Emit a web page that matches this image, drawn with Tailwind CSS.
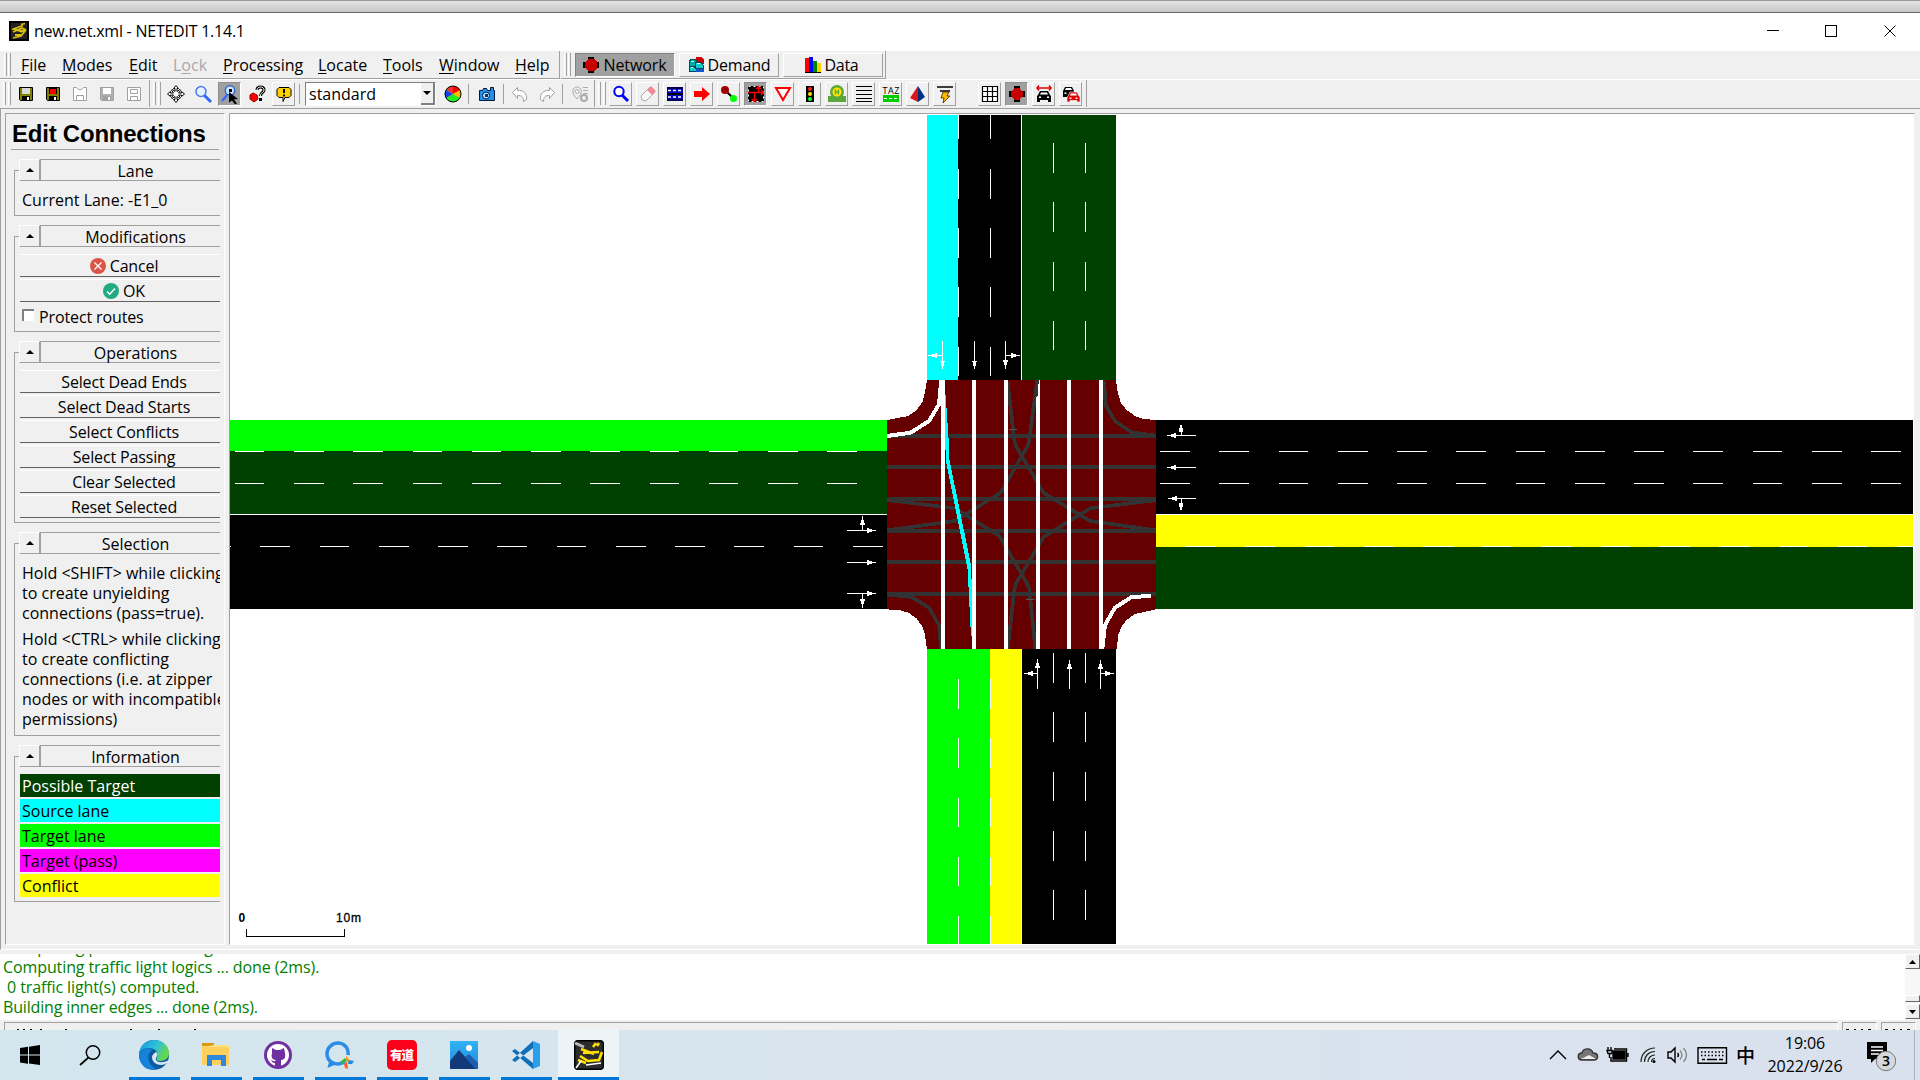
<!DOCTYPE html>
<html lang="en">
<head>
<meta charset="utf-8">
<title>new.net.xml - NETEDIT 1.14.1</title>
<script src="https://cdn.jsdelivr.net/npm/@tailwindcss/browser@4"></script>
</head>
<body class="w-[1920px] h-[1080px] overflow-hidden flex flex-col bg-[#f0f0f0] text-black text-[16px] leading-[20px] font-['Open_Sans','Noto_Sans_CJK_SC',sans-serif]">

<!-- window behind + title bar -->
<div class="h-[13px] shrink-0 border-t border-t-[#9a9a9a] border-b border-b-[#666] bg-linear-to-b from-[#e4e4e4] to-[#c8c8c8]"></div>
<header class="h-[38px] shrink-0 bg-white flex items-center pl-[9px]">
  <svg class="w-5 h-5 mt-[-2px]" viewBox="0 0 20 20"><path fill="#222" stroke="#000" stroke-width="2" d="M1 1h18v18H1z"/><path fill="none" stroke="#d9bd10" stroke-width="1.800" d="M3 8.500l11-4M12 3.500l4-1M4 11l9-4 4 2M5 8l8 3M9 9l7 1-4 5-8 2M6 14h6"/></svg>
  <span class="ml-[5px] text-[16px] tracking-[-0.24px] mt-[-3px]" id="wtitle">new.net.xml - NETEDIT 1.14.1</span>
  <svg class="ml-auto mr-[20px] mt-[-2px] w-[133px] h-3" viewBox="0 0 133 12" fill="none" stroke="#000" shape-rendering="crispEdges"><path d="M0 5.500h12M58.500 .5h11v11h-11z"/><path shape-rendering="auto" d="M117.500 .5l11 11M128.500 .5l-11 11"/></svg>
</header>

<!-- menu bar -->
<div class="h-[28px] shrink-0 flex">
  <nav class="w-[560px] h-[28px] flex items-center border-b border-r border-[#a0a0a0] pl-[4px]">
    <span class="w-[3px] h-[23px] border-l border-white border-r border-r-[#a0a0a0]"></span><span class="ml-[1px] w-[3px] h-[23px] border-l border-white border-r border-r-[#a0a0a0]"></span>
    <div id="menu" class="flex ml-[10px]"></div>
  </nav>
  <div class="ml-px w-[325px] h-[28px] flex items-center border-b border-r border-[#a0a0a0] pl-[3px]">
    <span class="w-[3px] h-[23px] border-l border-white border-r border-r-[#a0a0a0]"></span><span class="ml-[1px] w-[3px] h-[23px] border-l border-white border-r border-r-[#a0a0a0]"></span>
    <div class="ml-[4px] w-[100px] shrink-0 h-[24px] bg-[#a0a0a0] border border-b-white border-r-white border-[#808080] flex items-center justify-center gap-[4px]">
      <svg class="w-4 h-4" viewBox="0 0 16 16" shape-rendering="crispEdges"><path d="M5 0h6v16H5zM0 5h16v6H0z"/><path fill="#c80000" d="M5 2h6l3 3v6l-3 3H5l-3-3V5z"/></svg><span class="tracking-[-0.1px]">Network</span></div>
    <div class="ml-[4px] w-[100px] shrink-0 h-[24px] border border-white border-b-[#a0a0a0] border-r-[#a0a0a0] flex items-center justify-center gap-[4px]">
      <svg class="w-4 h-4" viewBox="0 0 16 16" shape-rendering="crispEdges"><path fill="#c00" d="M8 0h6l2 3v4H8z"/><path fill="#0aa" stroke="#055" d="M1 5l2-3h4l2 3v4H1z"/><path fill="#1cc" stroke="#045" d="M7 8l1-3h5l2 3v3H7zM1 12l1-3h4l2 3v2H1z"/><path fill="#15c" d="M8 12h8v3H8z"/><path fill="#fff" d="M3 4h3v1H3zM9 6h3v1H9zM3 10h2v1H3z"/></svg><span class="tracking-[-0.15px]">Demand</span></div>
    <div class="ml-[4px] w-[100px] shrink-0 h-[24px] border border-white border-b-[#a0a0a0] border-r-[#a0a0a0] flex items-center justify-center gap-[4px] pr-[3px]">
      <svg class="w-4 h-4" viewBox="0 0 16 16" shape-rendering="crispEdges"><path fill="#f00" d="M0 1h4v15H0z"/><path fill="#00f" d="M4 0h4v16H4z"/><path fill="#080" d="M8 4h4v12H8z"/><path fill="#fc0" d="M12 6h4v10h-4z"/><path d="M0 15h16v1H0z"/></svg><span class="tracking-[-0.3px]">Data</span></div>
  </div>
</div>

<!-- tool bars -->
<div class="h-[30px] shrink-0 flex border-b border-[#a0a0a0] border-t border-t-white pb-px">
  <div id="bar1" class="w-[150px] flex items-center border-r border-[#a0a0a0] pl-[3px]"></div>
  <div id="bar2" class="ml-px w-[444px] flex items-center border-r border-[#a0a0a0] pl-[2px]"></div>
  <div id="bar3" class="ml-px w-[491px] flex items-center border-r border-[#a0a0a0] pl-[2px]"></div>
</div>

<!-- work area -->
<main class="h-[841px] shrink-0 border-l border-[#a0a0a0] border-b border-b-white flex pt-[4px] pl-[4px]">
  <aside class="w-[220px] h-[832px] border border-[#a0a0a0] border-r-white border-b-white overflow-hidden pl-[5px]">
    <div class="w-[208px] h-[36px] border-b border-[#a0a0a0] pl-[1px] pt-[8px] font-['Liberation_Sans',sans-serif] font-bold text-[24px] leading-[24px] whitespace-nowrap tracking-[-0.23px]">Edit Connections</div>
    <div id="groups" class="ml-[3px] mt-[9px] w-[206px] overflow-hidden flex flex-col gap-[9px]"></div>
  </aside>
  <section class="ml-[4px] w-[1686px] h-[832px] border border-[#a0a0a0] border-r-[#f0f0f0] border-b-white bg-white">
    <svg id="net" class="block w-[1683px] h-[830px]" viewBox="230 114 1683 830" shape-rendering="crispEdges"></svg>
  </section>
</main>

<!-- message log -->
<div class="h-[70px] shrink-0 pt-[4px] flex">
  <div class="w-[1905px] h-[66px] bg-white overflow-hidden flex flex-col justify-end pl-[3px] pb-[3px] text-[#008000] whitespace-pre tracking-[-0.1px]" id="log"><p>Computing priorities and logics ... done</p><p>Computing traffic light logics ... done (2ms).</p><p> 0 traffic light(s) computed.</p><p class="tracking-[-0.16px]">Building inner edges ... done (2ms).</p></div>
  <div class="w-[15px] h-[66px] bg-[#f7f7f7] flex flex-col">
    <div class="h-[15px] bg-[#f0f0f0] border border-white border-b-[#666] border-r-[#666] flex items-center justify-center"><svg class="w-[7px] h-1" viewBox="0 0 7 4"><path d="M0 4L3.500 0 7 4z"/></svg></div>
    <div class="mt-[26px] h-[7px] bg-[#f0f0f0] border border-white border-b-[#666] border-r-[#666]"></div>
    <div class="mt-[2px] h-[15px] bg-[#f0f0f0] border border-white border-b-[#666] border-r-[#666] flex items-center justify-center"><svg class="w-[7px] h-1" viewBox="0 0 7 4"><path d="M0 0L3.500 4 7 0z"/></svg></div>
  </div>
</div>
<div class="h-[10px] shrink-0 pt-[2px] pl-[4px] flex gap-[4px]">
  <div class="w-[1834px] h-2 border-t border-l border-[#a0a0a0] border-r border-r-white"><svg class="w-[300px] h-[7px]" viewBox="0 0 300 7"><path d="M12 6h2v1h-2zM18 6h2v1h-2zM25 6h2v1h-2zM35 6h2v1h-2zM60 6h2v1h-2zM125 6h2v1h-2zM153 6h2v1h-2zM189 6h2v1h-2z"/></svg></div>
  <div class="w-[35px] h-2 border-t border-l border-[#a0a0a0] border-r border-r-white"><svg class="w-[34px] h-[7px]" viewBox="0 0 34 7"><path d="M3 6h3v1H3zM11 6h2v1h-2zM18 6h2v1h-2zM25 6h3v1h-3z"/></svg></div>
  <div class="w-[35px] h-2 border-t border-l border-[#a0a0a0] border-r border-r-white"><svg class="w-[34px] h-[7px]" viewBox="0 0 34 7"><path d="M3 6h3v1H3zM11 6h2v1h-2zM18 6h2v1h-2zM25 6h3v1h-3z"/></svg></div>
</div>

<!-- taskbar -->
<footer class="h-[50px] shrink-0 flex bg-linear-to-r from-[#d3e6ee] via-[#d8e4ee] to-[#dae1ee]">
  <div id="tasks" class="flex"></div>
  <div class="ml-auto flex items-center h-[50px] w-[371px]">
    <svg class="w-[180px] h-[30px]" viewBox="0 0 180 30" fill="none" stroke="#000" stroke-width="1.400">
      <path d="M1 19l8-8 8 8"/>
      <path stroke="#333" fill="#777" d="M33 20c-5 0-5-7 0-7 1-5 9-6 11 0 6 0 6 7 1 7z"/><path stroke="none" fill="#eee" d="M32 19l8-4 7 4z"/>
      <path fill="#000" d="M64 11h12v8H64z"/><path d="M65 9h12.500v12H62v-4M79 13v4"/><path d="M59 7v3M62 7v3M58 10.500h5v3h-4zM60.500 14v4"/>
      <g stroke="#222" stroke-width="1.200"><path d="M92 22c0-8 6-14 14-14M95.500 22c0-6 4-10.500 10.500-10.500M99 22c0-4 3-7 7-7"/><path d="M102.500 22c0-2 1.500-3.500 3.500-3.500"/></g><circle cx="105" cy="21.500" r="1.500" fill="#000" stroke="none"/>
      <path d="M119 12h3l4-4v14l-4-4h-3z"/><path d="M128.500 13q2 2 0 4"/><path stroke="#888" d="M131 10.500q4 4.500 0 9M134.500 8q6 7 0 14"/>
      <path d="M149 7.700h28.500v15.600H149z"/><path stroke-dasharray="1.500 2" d="M152 12h23M152 15.500h23"/><path d="M153 19.500h3M158 19.500h10M170 19.500h4"/>
    </svg>
    <span class="ml-[7px] text-[19px] leading-[24px] w-[20px] font-medium font-['Noto_Sans_CJK_SC',sans-serif]">中</span>
    <div class="ml-[9px] w-[80px] text-center leading-[23px] text-[16px] tracking-[-0.1px]"><p>19:06</p><p id="date">2022/9/26</p></div>
    <svg class="ml-[21px] w-[32px] h-[34px]" viewBox="0 0 32 34"><path d="M1 4h20v17H9l-4 4v-4H1z"/><path stroke="#fff" stroke-width="1.500" d="M5 9h12M5 12.500h12M5 16h8"/><circle cx="20" cy="23" r="9.700" fill="#d5d8dc" stroke="#777"/><text x="20" y="28" text-anchor="middle" font-size="14" font-weight="600">3</text></svg>
    <span class="ml-auto mr-[5px] w-px h-[50px] bg-[#aab4c0]"></span>
  </div>
</footer>

<script>
const $ = id => document.getElementById(id);

// Menu entries: label, index of the accelerator letter, width
$('menu').innerHTML = [['File',0,41],['Modes',0,67],['Edit',0,44],['Lock',1,50],['Processing',0,95],['Locate',0,65],['Tools',0,56],['Window',0,76],['Help',0,40]]
  .map(([t,i,w]) => `<span class="${t==='Lock'?'text-[#a8a8a8]':'text-black'}" style="width:${w}px">${t.slice(0,i)}<span class="underline underline-offset-2">${t[i]}</span>${t.slice(i+1)}</span>`).join('');

// Tool bar icons, 20 x 20
const floppy = (a,b,c) => `<path fill="${a}" stroke="${b}" d="M3.500 3.500h13v13h-12l-1-1z"/><path fill="${c}" d="M6 4h8v6H6z"/><path fill="${b}" d="M6 12h8v5H6z"/><path fill="#fff" d="M11 13h2v3h-2z"/>`;
const icons = {
  save: floppy('#808000','#000','#d8d8d8'), saveAs: floppy('#808000','#000','#000')+'<path fill="#f00" d="M7 5h6v5H7z"/>',
  gsave: '<g fill="#fff" stroke="#a0a0a0"><path d="M3.500 3.500h3l2 2h3l2-2h3v13h-13z"/><path d="M6.500 11.500h7v5h-7z"/></g>',
  gsave2: floppy('#b0b0b0','#a0a0a0','#fff'), gsave3: '<g fill="#fff" stroke="#a0a0a0"><path d="M3.500 3.500h13v13h-13zM6.500 5.500h7v4h-7zM6.500 12.500h7v4h-7z"/></g>',
  move: '<path fill="#fff" stroke="#000" d="M10 1.500l2.500 3h-1.500v3l3-2 .5 1-2 2.500h3V7.500l3 2.500-3 2.500V11h-3l2 3-1 .500-2.500-2v3h1.500l-2.500 3-2.500-3h1.500v-3l-3 2-.500-1 2-2.500h-3v1.500L1.500 10l3-2.500V9h3l-2-3 1-.500 2.500 2v-3H7.500z"/>',
  zoom: '<path stroke="#36f" stroke-width="3" d="M11 11l7 7"/><circle cx="8" cy="7.500" r="5" fill="#e4f4ff" stroke="#4a78f0" stroke-width="1.500"/>',
  inspect: '<path stroke="#36f" stroke-width="2" d="M8 10l-6 7"/><circle cx="10" cy="6.500" r="4.700" fill="#cfe6ff" stroke="#36c" stroke-width="1.500"/><path d="M9 5h3v3H9zM9 8l9 7-4 .500 3 4-2 1-3-4-3 2z"/>',
  quest: '<path fill="#f00" stroke="#800" d="M3 11l3-2 4 2 1 4-4 3-4-3z"/><path fill="none" stroke="#000" stroke-width="3" d="M10 6c0-4 7-4 7 0 0 3-3.500 2-3.500 6M13.500 14v3"/><path fill="none" stroke="#fff" d="M10 6c0-4 7-4 7 0 0 3-3.500 2-3.500 6"/>',
  note: '<path fill="#ffd100" stroke="#000" d="M5 3.500h10l2 2v6l-2 2h-4l-2 4v-4H5l-2-2v-6z"/><path stroke="#000" stroke-width="2" d="M10 5v4M10 10.500v2"/>',
  wheel: '<circle cx="10" cy="10" r="8" fill="#fc0"/><path fill="#f00" d="M10 10V2a8 8 0 0 1 7 4z"/><path fill="#e33" d="M10 10L3 6a8 8 0 0 1 7-4z"/><path fill="#fb0" d="M10 10l7-4a8 8 0 0 1 0 8z"/><path fill="#2e2" d="M10 10l7 4a8 8 0 0 1-14 0z"/><path fill="#14e" d="M10 10l-7 4a8 8 0 0 1 0-8z"/><circle cx="10" cy="10" r="8" fill="none" stroke="#000"/>',
  camera: '<path fill="#2090f0" stroke="#001838" d="M2.500 6.500h3l1-2h3l1 2h3v-3h3v3h1v10h-15z"/><circle cx="9" cy="11.500" r="3.500" fill="#bdf" stroke="#024"/><path fill="#037" d="M8 10h3v3H8z"/>',
  undo: '<path fill="#fff" stroke="#a0a0a0" d="M2.500 8.500l5-5v3c6-1 10 4 9 9l-3 2c0-5-2-6-6-6v3z"/>', redo: '<path fill="#fff" stroke="#a0a0a0" d="M17.500 8.500l-5-5v3c-6-1-10 4-9 9l3 2c0-5 2-6 6-6v3z"/>',
  pin: '<g fill="none" stroke="#aaa"><path d="M7 15c-7-7-4-12 0-12s7 5 0 12z"/><circle cx="7" cy="7.500" r="2"/><path d="M13 3.500h5M13 6.500h5M13 9.500h5"/><circle cx="14" cy="14" r="3" stroke-width="2"/></g>',
  find: '<path stroke="#00f" stroke-width="3" d="M11 11l6 6"/><circle cx="8" cy="7.500" r="4.700" fill="#fff" stroke="#00f" stroke-width="2"/>',
  erase: '<path fill="#f7f7f7" stroke="#aaa" d="M3 12l9-9 5 5-9 9-4-1z"/><path fill="#f08a94" d="M9 6l4-4 5 5-4 4z"/>',
  edge: '<path fill="#0000c0" d="M2 3h16v14H2z"/><path fill="#00004c" d="M2 3h16v2H2zM2 15h16v2H2z"/><path stroke="#fff" stroke-width="1.500" stroke-dasharray="3 2" d="M3 6.500h14M3 13h14"/><path d="M2 9h16v2H2z"/>',
  arrow: '<path fill="#f00" d="M2 7h8V3l8 7-8 7v-4H2z"/>',
  conn: '<path stroke="#000" stroke-width="2" d="M6 6l8 8"/><circle cx="6" cy="6" r="4" fill="#a00000"/><circle cx="14.500" cy="14.500" r="3.500" fill="#0f0"/>',
  prohib: '<path d="M2 2h16v16H2z"/><path stroke="#fff" stroke-dasharray="2 3" fill="none" d="M2.500 2.500h15v15h-15z"/><path fill="none" stroke="#f00" stroke-width="1.300" d="M2 8.500h15M8.500 17V8.500M12.500 8.500V3M15 6l2.500 2.500-2.500 2.500M10 5l2.500-2.500L15 5M6 15l2.500 2.500L11 15"/>',
  yield: '<path fill="#fff" stroke="#f00" stroke-width="2" d="M3 4h14l-7 12z"/>',
  tls: '<path d="M6 2h8v16H6z"/><circle cx="10" cy="5" r="2" fill="#f22"/><circle cx="10" cy="10" r="2" fill="#fd0"/><circle cx="10" cy="15" r="2" fill="#1f3"/>',
  stop: '<circle cx="10" cy="8" r="7" fill="#5aa83a"/><path fill="#5aa83a" d="M1 12h18v6H1z"/><circle cx="10" cy="8" r="4.500" fill="#ffe600"/><path fill="none" stroke="#5aa83a" stroke-width="1.300" d="M8.500 5.500v5M11.500 5.500v5M8.500 8h3"/>',
  lines: '<path stroke="#000" stroke-width="1.300" shape-rendering="crispEdges" d="M2 2.500h16M2 6.500h16M2 10.500h16M2 14.500h16M2 17.500h16"/>',
  taz: '<text x="10" y="9.500" text-anchor="middle" font-size="9" textLength="17">TAZ</text><path fill="#0c0" d="M2 11h16v7H2z"/><path stroke="#fff" stroke-dasharray="3 2" d="M3 14.500h14"/>',
  cone: '<path fill="#d81818" d="M10 2L2 14l8 4z"/><path fill="#003080" d="M10 2l7 11-7 5z"/>',
  wire: '<path stroke="#000" stroke-width="1.500" d="M2 3h16M5 7h10"/><path fill="#fb0" stroke="#420" stroke-width=".8" d="M8 8h6l-2 4h3l-7 7 1-5H6z"/>',
  grid: '<path fill="#fff" stroke="#000" stroke-width="1.200" d="M2.500 2.500h15v15h-15zM7.500 2.500v15M12.500 2.500v15M2.500 7.500h15M2.500 12.500h15"/>',
  node: '<path d="M7 2h6v16H7zM2 7h16v6H2z"/><path fill="#c80000" d="M8 4h4l4 4v4l-4 4H8l-4-4V8z"/>',
  carw: '<path fill="none" stroke="#d00" stroke-width="1.500" d="M3 4h14M5 1.500L3 4l2 2.500M15 1.500L17 4l-2 2.500"/><path d="M4 11l2-4h8l2 4 1 1v6h-3v-2H6v2H3v-6z"/><path fill="#fff" d="M6 10.500l1-2h6l1 2zM5 12.500h2v1.500H5zM13 12.500h2v1.500h-2z"/>',
  cars: '<path d="M2 7l2-4h7l2 4v6H2z"/><path fill="#fff" d="M4 6l1-2h5l1 2zM3.500 8.500h2V10h-2z"/><path fill="#d00" stroke="#fff" stroke-width=".6" d="M7 12l2-4h7l2 4 1 1v5h-3v-1.500H9V18H6v-5z"/><path fill="#fff" d="M9 11.500l1-2h5l1 2zM8.500 13.500h2V15h-2zM14.500 13.500h2V15h-2z"/>'
};
const grip = '<span class="w-[3px] h-[23px] shrink-0 border-l border-white border-r border-r-[#a0a0a0]"></span>';
const grips = grip + '<span class="w-[2px] shrink-0"></span>' + grip;
const svg = n => `<svg class="w-[20px] h-[20px] shrink-0" viewBox="0 0 20 20">${icons[n]}</svg>`;
const flat = n => `<span class="w-[27px] shrink-0 flex justify-center">${svg(n)}</span>`;
const raised = n => `<span class="w-[27px] shrink-0 flex justify-center"><span class="w-[23px] h-[24px] flex items-center justify-center border border-white border-b-[#a0a0a0] border-r-[#a0a0a0]">${svg(n)}</span></span>`;
const pressed = n => `<span class="w-[27px] shrink-0 flex justify-center"><span class="w-[23px] h-[24px] flex items-center justify-center bg-[#a0a0a0] border border-[#909090] border-b-white border-r-white">${svg(n)}</span></span>`;
const sep = '<span class="w-px h-[20px] shrink-0 bg-[#a0a0a0]"></span>';
const gap = w => `<span class="shrink-0" style="width:${w}px"></span>`;
$('bar1').innerHTML = grips + gap(1) + ['save','saveAs','gsave','gsave2','gsave3'].map(flat).join('');
$('bar2').innerHTML = grips + gap(1) + flat('move') + flat('zoom') + pressed('inspect') + flat('quest') + raised('note') + gap(2) + sep + gap(5) +
  `<span class="w-[131px] h-[24px] shrink-0 bg-white border border-[#808080] border-r-white border-b-white flex items-center pl-[3px]"><span class="mt-px">standard</span><span class="ml-auto w-[14px] h-[22px] bg-[#f0f0f0] border-r-2 border-b-2 border-[#808080] flex items-center justify-center"><svg class="w-2 h-1 shrink-0" viewBox="0 0 8 4"><path d="M0 0h8L4 4z"/></svg></span></span>` +
  gap(3) + flat('wheel') + gap(2) + sep + gap(4) + flat('camera') + gap(3) + sep + gap(2) + flat('undo') + flat('redo') + gap(2) + sep + gap(3) + flat('pin');
$('bar3').innerHTML = grips + gap(1) + ['find','erase','edge','arrow','conn'].map(raised).join('') + pressed('prohib') + ['yield','tls','stop','lines','taz','cone','wire'].map(raised).join('') +
  gap(18) + raised('grid') + pressed('node') + raised('carw') + raised('cars');

// Side panel groups: title, height, content
const group = (title, h, body) => `<div class="relative shrink-0" style="height:${h}px">
  <div class="absolute left-0 right-0 top-[11px] bottom-0 border-l border-b border-t border-[#a0a0a0]"></div>
  <div class="relative flex pl-[5px]"><div class="w-[21px] shrink-0 h-[22px] bg-[#f0f0f0] border border-white border-b-[#a0a0a0] border-r-[#a0a0a0] flex items-center justify-center"><svg class="w-2 h-1" viewBox="0 0 8 4"><path d="M0 4L4 0l4 4z"/></svg></div>
  <div class="w-[190px] shrink-0 h-[22px] bg-[#f0f0f0] border-t border-b border-l border-[#a0a0a0] text-center pt-px">${title}</div></div>
  <div class="relative pl-[6px]">${body}</div></div>`;
const btn = (t, ic='') => `<div class="w-[208px] h-[23px] mb-[2px] border-t border-white border-b border-b-[#606060] flex items-center justify-center gap-[4px]">${ic}<span class="mt-px tracking-[-0.15px]">${t}</span></div>`;
const row = ([t,c]) => `<div class="w-[208px] h-[23px] mb-[2px] pl-[2px] pt-[2px] ${c}">${t}</div>`;
$('groups').innerHTML =
  group('Lane', 57, '<p class="pl-[2px] pt-[9px]">Current Lane: -E1_0</p>') +
  group('Modifications', 107, '<div class="pt-[7px]">' +
    btn('Cancel','<svg class="w-4 h-4" viewBox="0 0 16 16"><circle cx="8" cy="8" r="8" fill="#da5548"/><path stroke="#fff" stroke-width="1.300" d="M4.500 4.500l7 7M11.500 4.500l-7 7"/></svg>') +
    btn('OK','<svg class="w-4 h-4" viewBox="0 0 16 16"><circle cx="8" cy="8" r="8" fill="#21ab82"/><path fill="none" stroke="#fff" stroke-width="1.500" d="M4 8.500l2.700 2.700L12 5.500"/></svg>') +
    '<div class="flex pl-[2px] pt-[3px]"><span class="mt-[2px] w-[12px] h-[12px] bg-white border-t-2 border-l-2 border-[#808080]"></span><span class="ml-[5px] tracking-[-0.12px]">Protect routes</span></div></div>') +
  group('Operations', 182, '<div class="pt-[7px]">' + ['Select Dead Ends','Select Dead Starts','Select Conflicts','Select Passing','Clear Selected','Reset Selected'].map(t => btn(t)).join('') + '</div>') +
  group('Selection', 204, '<div class="pl-[2px] pt-[9px] whitespace-pre">Hold &lt;SHIFT&gt; while clicking\nto create unyielding\nconnections (pass=true).</div><div class="pl-[2px] pt-[6px] whitespace-pre"><span class="tracking-[0.08px]">Hold &lt;CTRL&gt; while clicking</span>\nto create conflicting\nconnections (i.e. at zipper\nnodes or with incompatible\npermissions)</div>') +
  group('Information', 157, '<div class="pt-[7px]">' + [['Possible Target','bg-[#004000] text-white'],['Source lane','bg-[#00ffff]'],['Target lane','bg-[#00ff00]'],['Target (pass)','bg-[#ff00ff]'],['Conflict','bg-[#ffff00]']].map(row).join('') + '</div>');

// Road network
const rect = (x,y,x2,y2,f) => `<rect x="${x}" y="${y}" width="${x2-x}" height="${y2-y}" fill="${f}"/>`;
const P = 59.25, G = '#004000';
const hdash = (y,x,end) => { let s=''; for(; x<end; x+=P) s += rect(Math.round(Math.max(x,230)),y,Math.round(Math.min(x+29.6,end)),y+1,'#fff'); return s; };
const vdash = (x,y,end) => { let s=''; for(; y<end; y+=P) s += rect(x,Math.round(Math.max(y,115)),x+1,Math.round(Math.min(y+29.6,end)),'#fff'); return s; };
// Arrow of a given length whose tip is at (x,y), pointing in direction d
const arr = (x,y,d,len) => `<g transform="translate(${x} ${y}) rotate(${({r:0,d:90,l:180,u:270})[d]})" fill="#fff"><rect x="${-len}" y="-.5" width="${len-2}" height="1"/><path d="M0 0L-9 -2.500V2.500z"/></g>`;
const line = (pts,c,w=11) => `<polyline points="${pts}" fill="none" stroke="${c}" stroke-width="${w}"/>`;
const D = '#333';
let n = rect(927,115,958,380,'#0ff')+rect(958,115,1021,380,'#000')+rect(1022,115,1116,380,G)
  + rect(230,420,887,451,'#0f0')+rect(230,451,887,514,G)+rect(230,515,887,609,'#000')
  + rect(1156,420,1913,514,'#000')+rect(1156,515,1913,547,'#ff0')+rect(1156,547,1913,609,G)
  + rect(927,649,990,944,'#0f0')+rect(990,649,1021,944,'#ff0')+rect(1022,649,1116,944,'#000');
n += vdash(958,109.7,380)+vdash(990,109.7,380)+vdash(1053,143,370)+vdash(1085,143,370)
  + vdash(958,679,944)+vdash(990,679,944)+vdash(1053,653.2,944)+vdash(1085,653.2,944)
  + hdash(451,234.8,880)+hdash(483,234.8,880)+hdash(546,201.2,887)
  + hdash(451,1160.2,1913)+hdash(483,1160.2,1913)+hdash(546,1186,1913);
n += arr(942.5,369.5,'d',29)+arr(928,355.5,'l',14)+arr(974.5,369.5,'d',29)+arr(1005.5,369,'d',28)+arr(1020,355.5,'r',14)
  + arr(1037.5,659,'u',30)+arr(1024,673.5,'l',13)+arr(1069.500,660,'u',29)+arr(1100.500,660,'u',29)+arr(1114,673.500,'r',13)
  + arr(1167,435.500,'l',29)+arr(1181,423,'u',12)+arr(1167,467.500,'l',29)+arr(1168,498.500,'l',28)+arr(1181,512,'d',13)
  + arr(876,530.500,'r',29)+arr(862.500,516,'u',14)+arr(876,562.500,'r',29)+arr(876,593.500,'r',29)+arr(862.500,608,'d',14);
n += '<g transform="translate(860 340) scale(.333333)"><path fill="#600" d="M201 120H768L773 155 783 190 800 210 825 228 850 237 888 240V808L825 822 800 840 783 862 775 885 770 927H201L195 885 187 860 170 835 145 818 120 811 81 808V240L145 228 170 210 188 185 196 150z"/>'
  + [287.5,381,477,573,666,762].map(y => line(`81,${y} 888,${y}`,D,12)).join('')
  + line('732,122 737,195 765,243 815,277 888,287',D)+line('81,764 155,771 207,803 237,855 243,926',D)
  + line('443,125 462,295 468,318 550,458 690,543 888,571',D)+line('532,120 508,295 505,315 422,458 285,543 81,571',D)
  + line('81,480 285,505 418,588 500,728 508,745 526,926',D)+line('888,480 690,505 552,590 468,730 463,750 443,926',D)
  + line('244,120 237,193 207,243 152,278 81,288','#fff',12)+line('872,768 815,771 765,803 735,855 727,926','#fff',12)
  + [249,342,438,534,627,723].map(x => line(`${x},120 ${x},927`,'#fff',12)).join('')
  + line('532,120 528,170',D,9)
  + '<path fill="#0ff" d="M254 165H257L266 300 268 358 334 680 337 888H333L323 690 257 358z"/><path stroke="#555" stroke-width="3" d="M446 268h24M498 779h27"/></g>';
n += '<path fill="none" stroke="#000" d="M246.500 929v7.500H344.500V929"/><g font-family="Liberation Sans" font-size="12"><text x="238.500" y="922" font-weight="bold">0</text><text x="336" y="922" stroke="#000" stroke-width=".3" textLength="25">10m</text></g>';
$('net').innerHTML = n;

// Task bar entries, 30 x 30 icons
const app = (s, k) => `<div class="${k==='on'?'w-[61px] bg-[#edf4f8]':k==='last'?'w-[51px] mr-[6px] pr-px':'w-[51px] mr-[11px] pr-px'} h-[50px] border-b-[3px] border-[#0078d7] flex items-center justify-center pt-[3px]"><svg class="w-[30px] h-[30px]" viewBox="0 0 30 30">${s}</svg></div>`;
$('tasks').innerHTML = '<svg class="w-[129px] h-[50px]" viewBox="0 0 129 50"><path d="M20 18l8-1.200V24.500h-8zM29 16.700l11-1.700v9.500H29zM20 25.500h8v8.200l-8-1.200zM29 25.500h11V35l-11-1.500z"/><circle cx="93" cy="22.500" r="6.700" fill="none" stroke="#000" stroke-width="1.500"/><path stroke="#000" stroke-width="1.700" d="M88.500 27.500L80 35"/></svg>' +
 app('<defs><linearGradient id="eg" x1="0" y1="0" x2="1" y2=".4"><stop offset="0" stop-color="#1796e0"/><stop offset=".6" stop-color="#2fc2d8"/><stop offset="1" stop-color="#66d84a"/></linearGradient></defs><circle cx="15" cy="15" r="15" fill="#0c59a4"/><path fill="url(#eg)" d="M0 14C1 5 7 0 15 0c9 0 15 6 15 13 0 6-5 8-9 8-3 0-4-1-3-3 3-6-3-10-8-10C4 8 1 11 0 14z"/><path fill="#1483d8" d="M0 14c4-6 10-7 13-4-6 4-5 14 4 19C7 32 0 24 0 14z"/><path fill="#d6e6ee" d="M17 12c4 3-1 5 0 8 2 3 7 3 13 0-1 2-1 2-2 3-5 4-15 2-15-6 0-2 2-4 4-5z"/>') +
 app('<path fill="#d99a10" d="M1 3h12v4H1z"/><path fill="#ffd05c" d="M1 6h27v19H1z"/><path fill="#ffdf85" d="M3 7l10-2h15v2z"/><path fill="#2f88d8" d="M6 15h19v11h-5v-6h-9v6H6z"/>') +
 app('<circle cx="15" cy="15" r="14" fill="#7130a0"/><circle cx="15" cy="15" r="11" fill="#fff"/><path fill="#7130a0" d="M9 8l4 2h4l4-2 1 5c1 5-1 7-4 7v6h-6v-3c-3 0-3-2-4-3 2 0 2 2 4 1l1-1c-4 0-5-3-4-7z"/>') +
 app('<path fill="none" stroke="#2c8ce8" stroke-width="3.500" d="M20 22C10 27 2 21 2 14S8 3 13 3s11 4 10 12M6 21l-1 4 5-2"/><path fill="#ff9a18" d="M21 16l3 3v5l-3-4z"/><path fill="#37b54a" d="M15 22l5-4 2 3-4 3z"/><path fill="#ff5c28" d="M19 24l3-2 1 7-3-1z"/><path fill="#1a8df0" d="M24 20l5 1-2 3h-4z"/>') +
 app('<rect width="30" height="30" rx="5" fill="#fb0018"/><text x="15" y="20" fill="#fff" text-anchor="middle" font-size="12.500" font-weight="900" font-family="Noto Sans CJK SC" textLength="24">有道</text>') +
 app('<defs><linearGradient id="ph" x1="0" y1="0" x2="0" y2="1"><stop offset="0" stop-color="#30b4f4"/><stop offset="1" stop-color="#2186dc"/></linearGradient></defs><path fill="url(#ph)" d="M1 1h28v28H1z"/><path fill="#123a78" d="M1 21l9-11 17 19H1z"/><path fill="#1e5cae" d="M16 17l4-3 9 9v6h-2z"/><circle cx="20" cy="8" r="3" fill="#fff"/>') +
 app('<path fill="#0f6fb8" d="M1 11l3-2 18 14v6zM1 20l3 2L22 8V1z"/><path fill="#2aa0ec" d="M22 1l7 3v22l-7 3z"/>', 'last') +
 app('<rect x=".7" y=".7" width="28.600" height="28.600" rx="3" fill="#2c2c2c" stroke="#000" stroke-width="1.500"/><path fill="none" stroke="#ffe000" stroke-width="2.600" d="M7 9l13 5M9 13l16-1M6 16l8 5 11-1 3-8M4 20l8 3M19 7l3-4M23 6l2-3"/><path stroke="#bbb" stroke-width="3" d="M1 3l9 4"/><path stroke="#fff" stroke-width="1.500" d="M2 28l5-7M12 25l15-2"/>', 'on');
</script>
</body>
</html>
